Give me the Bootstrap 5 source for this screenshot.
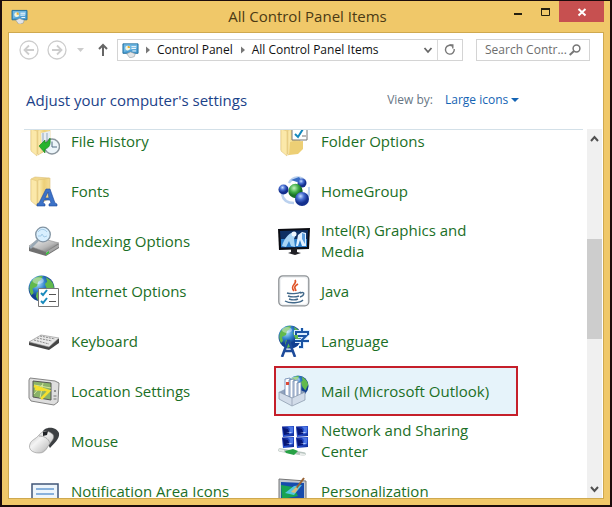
<!DOCTYPE html>
<html lang="en">
<head>
<meta charset="utf-8">
<meta name="viewport" content="width=device-width, initial-scale=1">
<title>All Control Panel Items</title>
<link rel="stylesheet" href="https://cdn.jsdelivr.net/npm/bootstrap@5.3.0/dist/css/bootstrap.min.css">
<style>
  body { font-family: "Open Sans", "Noto Sans", sans-serif; background: #f0c869; color: #111; }
  svg { display: block; flex: none; }
  button { border: 0; background: none; padding: 0; color: inherit; }
  .window { height: 100vh; border: 2px solid #1c0c0c; border-top-width: 1px; }
  .titlebar { height: 31px; padding-left: 9px; padding-right: 6px; }
  .titlebar h1 { font-size: 15px; line-height: 30px; color: #4b3a14; }
  .caption-side { flex: 1 1 0; }
  .caption-buttons button { height: 21px; width: 27px; }
  .caption-buttons .close-button { width: 45px; background: #c75050; }
  .client { margin: 0 6px 6px; border: 1px solid #cfa94f; background: #fff; min-height: 0; }
  .toolbar { height: 34px; padding: 0 13px 0 10px; }
  .field { height: 22px; border: 1px solid #d4d4d4; font-size: 12px; line-height: 20px; }
  .address { margin-left: 6px; margin-right: 13px; }
  .field a { color: #111; text-decoration: none; white-space: nowrap; }
  .refresh { width: 25px; border-left: 1px solid #d9d9d9; height: 20px; }
  .search { width: 114px; }
  .search input { border: 0; outline: 0; padding: 0 0 0 8px; width: 100%; min-width: 0; color: #6d6d6d; background: none; text-overflow: ellipsis; }
  .search input::placeholder { color: #6d6d6d; }
  .heading-row { height: 62px; padding: 4px 0 0 17px; }
  .heading-row h2 { font-size: 15px; line-height: 20px; color: #1b4289; }
  .view-by { font-size: 12px; margin-right: 84px; color: #687684; }
  .view-by select { appearance: none; border: 0; padding: 0; background: none; color: #1464b4; width: 66px; }
  .listing { min-height: 0; }
  .items-pane { overflow: hidden; border-top: 1px solid #d3e0e8; margin-left: 15px; margin-right: 4px; }
  .items { display: grid; grid-template-columns: repeat(auto-fill, 250px); grid-auto-rows: 50px; margin-top: -14px; }
  .item { padding: 0 24px 0 4px; gap: 11px; width: 244px; height: 50px; color: #1b6f26; font-size: 15px; line-height: 21px; text-decoration: none; }
  .item:hover { color: #1b6f26; background: #e8f4fb; }
  .item.selected { background: #e6f3fa; border: 2px solid #c51f2a; padding: 0 22px 0 2px; }
  .scrollbar { width: 16px; background: #f0f0f0; border-right: 1px solid #fff; }
  .scrollbar button { height: 20px; }
  .space-above { flex: 89 1 0; } .thumb { flex: 100 1 0; background: #cdcdcd; } .space-below { flex: 138 1 0; }
</style>
<script src="https://cdn.jsdelivr.net/npm/bootstrap@5.3.0/dist/js/bootstrap.bundle.min.js"></script>
</head>
<body>
<svg width="0" height="0" class="position-absolute" aria-hidden="true">
  <defs>
    <linearGradient id="fold" x1="0" x2="1"><stop stop-color="#fff0b5"/><stop offset=".5" stop-color="#eccf78"/><stop offset="1" stop-color="#f4dc94"/></linearGradient>
    <radialGradient id="globe" cx=".35" cy=".3"><stop stop-color="#b5e6ff"/><stop offset=".55" stop-color="#3485ce"/><stop offset="1" stop-color="#123f91"/></radialGradient>
    <radialGradient id="blue" cx=".4" cy=".3"><stop stop-color="#c4dcff"/><stop offset=".5" stop-color="#466cd0"/><stop offset="1" stop-color="#14308e"/></radialGradient>
    <radialGradient id="green" cx=".4" cy=".3"><stop stop-color="#c2f4bd"/><stop offset=".6" stop-color="#3eac46"/><stop offset="1" stop-color="#187025"/></radialGradient>
    <linearGradient id="metal" x2="1" y2="1"><stop stop-color="#fafafa"/><stop offset=".6" stop-color="#b7b7b7"/><stop offset="1" stop-color="#555"/></linearGradient>
    <linearGradient id="silver" x2="1" y2="1"><stop stop-color="#b5b5b5"/><stop offset=".4" stop-color="#f4f4f4"/><stop offset=".7" stop-color="#cfcfcf"/><stop offset="1" stop-color="#777"/></linearGradient>
    <linearGradient id="night" x2="1" y2="1"><stop stop-color="#061988"/><stop offset=".55" stop-color="#2850ce"/><stop offset="1" stop-color="#09258e"/></linearGradient>
    <symbol id="folder" viewBox="0 0 32 32">
      <path d="M3 4l4-2 14 1v20l-11 6-7-4z" fill="#f1d88c" stroke="#dcc078" stroke-width=".6"/>
      <path d="M10 5l12-2v20l-12 7z" fill="url(#fold)" stroke="#dcc078" stroke-width=".6"/>
      <path d="M3 4l6 2v25l-6-5z" fill="#fbe8a9" stroke="#e2c67c" stroke-width=".6"/>
    </symbol>
    <symbol id="earth" viewBox="0 0 24 24">
      <circle cx="12" cy="12" r="11.5" fill="url(#globe)"/>
      <path d="M2 8C4 3 9 .8 13 1l-1 3-3 2-1 4-4 2 1 4-2 2C1 15 1 11 2 8zM16 2c4 2 7 5 7 9l-3 6-3-4-2-5 2-2zM8 15l5 2-1 5-3 1-2-4z" fill="#62b94d"/>
      <ellipse cx="9" cy="5" rx="5" ry="3" fill="#fff" opacity=".4"/>
    </symbol>
    <symbol id="panel" viewBox="0 0 18 16">
      <path d="M1 1.5h16v10H1z" fill="#4b9ed3" stroke="#24719e"/>
      <path d="M2 2h14v4L2 10z" fill="#88c8ec" opacity=".6"/>
      <circle cx="6" cy="6" r="2.6" fill="#f3f7e3"/><path d="M6 6V3.4A2.6 2.6 0 018.6 6z" fill="#e9ae33"/>
      <path d="M10 4.5h5M10 6.5h5M11 9h4" stroke="#fff" stroke-width="1"/>
      <path d="M5 12l4-2 5 2-1 3-3 1H8z" fill="#e4e5e6" stroke="#8b969c" stroke-width=".6"/>
    </symbol>
    <symbol id="pc" viewBox="0 0 12 11"><path d="M0 .5l12-.5v10L1 11z" fill="url(#night)"/><path d="M1 2l5 1 2 5-6 1z" fill="#061674"/><path d="M5 0l3 3-1 5 4-1V1z" fill="#4b76e5"/><path d="M4 7l6-1-1 1z" fill="#dce9ff"/></symbol>
  </defs>
</svg>

<div class="window d-flex flex-column">
  <header class="titlebar d-flex flex-shrink-0">
    <div class="caption-side d-flex align-items-center"><svg width="17" height="15"><use href="#panel"/></svg></div>
    <h1 class="m-0 fw-normal">All Control Panel Items</h1>
    <div class="caption-side caption-buttons d-flex justify-content-end">
      <button type="button" aria-label="Minimize"><svg width="27" height="21"><path d="M9 13h8" stroke="#25200f" stroke-width="2"/></svg></button>
      <button type="button" aria-label="Maximize"><svg width="27" height="21"><path d="M9.500 8v6.500h8V8" fill="none" stroke="#25200f"/><path d="M9 8h9" stroke="#25200f" stroke-width="2"/></svg></button>
      <button type="button" class="close-button" aria-label="Close"><svg width="45" height="21"><path d="M19.500 8l7 6.500M26.500 8l-7 6.500" stroke="#fff" stroke-width="2"/></svg></button>
    </div>
  </header>

  <main class="client d-flex flex-column flex-grow-1">
    <nav class="toolbar d-flex align-items-center flex-shrink-0" aria-label="Location">
      <button type="button" aria-label="Back"><svg width="20" height="20" fill="none" stroke="#cdcdcd" stroke-width="1.300"><circle cx="10" cy="10" r="9"/><path d="M15 10H6M10 5.500L5.500 10l4.500 4.500" stroke-width="1.800"/></svg></button>
      <button type="button" class="ms-2" aria-label="Forward"><svg width="20" height="20" fill="none" stroke="#cdcdcd" stroke-width="1.300"><circle cx="10" cy="10" r="9"/><path d="M5 10h9M10 5.500l4.500 4.500-4.500 4.500" stroke-width="1.800"/></svg></button>
      <button type="button" class="ms-2" aria-label="Recent locations"><svg width="12" height="12"><path d="M2 4h7L5.500 8z" fill="#ccc"/></svg></button>
      <button type="button" class="ms-2" aria-label="Up"><svg width="16" height="16" fill="none" stroke="#666" stroke-width="2"><path d="M8 14V3M4 7l4-4 4 4"/></svg></button>
      <div class="field address d-flex align-items-center flex-grow-1">
        <svg class="ms-1" width="17" height="16"><use href="#panel"/></svg>
        <svg width="18" height="10"><path d="M7 1.500l4 3.500-4 3.500z" fill="#777"/></svg>
        <a href="#">Control Panel</a>
        <svg width="19" height="10"><path d="M8 1.500l4 3.500-4 3.500z" fill="#777"/></svg>
        <a href="#">All Control Panel Items</a>
        <button type="button" class="ms-auto" aria-label="Previous locations"><svg width="18" height="12"><path d="M5.500 4L9 8l3.500-4" fill="none" stroke="#666" stroke-width="1.800"/></svg></button>
        <button type="button" class="refresh d-flex align-items-center justify-content-center" aria-label="Refresh"><svg width="12" height="12" fill="none" stroke="#777" stroke-width="1.400"><path d="M8.500 2.200A4.400 4.400 0 1010.200 5"/><path d="M5.500 1h3.300v3.500"/></svg></button>
      </div>
      <div class="field search d-flex align-items-center flex-shrink-0">
        <input type="text" aria-label="Search Control Panel" placeholder="Search Contr...">
        <svg class="me-2" width="12" height="12" fill="none" stroke="#777"><circle cx="7.500" cy="4.500" r="3.400" stroke-width="1.500"/><path d="M5 7l-4.300 4" stroke-width="2"/></svg>
      </div>
    </nav>
    <div class="heading-row d-flex align-items-center flex-shrink-0">
      <h2 class="m-0 fw-normal">Adjust your computer's settings</h2>
      <div class="view-by d-flex align-items-center ms-auto">
        <label for="view" class="me-2 pe-1">View by:</label>
        <select id="view"><option>Large icons</option></select>
        <svg width="8" height="8"><path d="M0 2h8L4 6z" fill="#1464b4"/></svg>
      </div>
    </div>

    <div class="listing d-flex flex-grow-1">
      <div class="items-pane flex-grow-1">
        <div class="items">
          <a href="#" class="item d-flex align-items-center"><svg width="32" height="32"><use href="#folder"/><path d="M13 8l9-2v17l-8 3z" fill="#e8edf2"/><path d="M15 8v15M19 8v12" stroke="#91a7bf"/><circle cx="24" cy="21.500" r="7.500" fill="#edf5fa" stroke="#8b969e" stroke-width="1.500"/><path d="M24 16.500V22h5" fill="none" stroke="#506d84"/><path d="M11 21l6-6v3c3-1 4-3 5-5 1 7-1 10-5 11v4z" fill="#27b32d" stroke="#147e1b" stroke-width=".6"/></svg><span>File History</span></a>
          <a href="#" class="item d-flex align-items-center"><svg width="32" height="32"><use href="#folder"/><path d="M12 17l13-1v8l-5 5-9 1z" fill="#edcf75"/><path d="M14 1h15v14H14z" fill="#fff" stroke="#777"/><path d="M17 9l3 3 5-8" fill="none" stroke="#1689bd" stroke-width="2"/><path d="M24 11h4" stroke="#777"/></svg><span>Folder Options</span></a>
          <a href="#" class="item d-flex align-items-center"><svg width="32" height="32"><use href="#folder"/><path d="M9 31v-2l2-1 7-14h4l5 14 2 1v2h-8v-2l2-1-1-3h-6l-1 3 2 1v2zM17 23h4l-1-6z" fill="#3b72c8" stroke="#1d479c" stroke-width=".6" fill-rule="evenodd"/></svg><span>Fonts</span></a>
          <a href="#" class="item d-flex align-items-center"><svg width="32" height="32"><path d="M11 8C15 1 23 1 27 6M4 19c1 6 5 9 12 9M31 12c1 5 0 9-3 13" fill="none" stroke="#bbd1ee" stroke-width="2.500"/><path d="M13 5l8-3 3 4-5 1z" fill="#386dc4"/><circle cx="5.500" cy="14.500" r="5" fill="url(#blue)"/><circle cx="24" cy="8" r="4.500" fill="url(#blue)"/><circle cx="17.500" cy="16" r="7.200" fill="url(#green)"/><circle cx="24" cy="24" r="7" fill="url(#blue)"/></svg><span>HomeGroup</span></a>
          <a href="#" class="item d-flex align-items-center"><svg width="32" height="32"><path d="M1 22l10-7 20 4v4l-13 8-17-5z" fill="#707070"/><path d="M1 21l11-8 19 5-13 9z" fill="url(#metal)" stroke="#8c8c8c" stroke-width=".6"/><path d="M18 27l13-8v3l-13 8z" fill="#a7a7a7"/><path d="M18 28l3-2v2l-3 2z" fill="#34c739"/><path d="M10 15l-8 8" stroke="#9aa9b5" stroke-width="2.500"/><circle cx="15" cy="9.500" r="7.300" fill="#d8efff" stroke="#8193a2" stroke-width="1.300"/><path d="M10 7c3-4 7-3 9 0M10 11h3l1-2 2 3 3-1" fill="none" stroke="#a5cce8"/></svg><span>Indexing Options</span></a>
          <a href="#" class="item d-flex align-items-center"><svg width="32" height="32"><path d="M0 4l32-1-1 21-30 1z" fill="#0b0c12"/><path d="M2 6l28-1-1 17-26 1z" fill="#0d2f63"/><path d="M3 14h26v8H3z" fill="#2d7fcb"/><path d="M4 21c2-7 6-12 11-14l3 2-2 5 1 8-4-1-2-5-3 6z" fill="#a9d5f5"/><circle cx="16" cy="9" r="2.500" fill="#eef7ff"/><path d="M20 10l4-3 4 1v13h-4l-2-6-2 6h-2z" fill="#e2f1ff"/><path d="M24 8l3 1v10l-3-5z" fill="#5c9ede"/><path d="M13 24l6-1v4l4 1-6 2-7-2 3-1z" fill="#202026"/></svg><span>Intel(R) Graphics and Media</span></a>
          <a href="#" class="item d-flex align-items-center"><svg width="32" height="32"><use href="#earth" x="0" y="0" width="27" height="27"/><path d="M10.500 13.500h20v18h-20z" fill="#fff" stroke="#777"/><path d="M13 18l2 2 4-5M13 26l2 2 4-5" fill="none" stroke="#1789bc" stroke-width="2"/><path d="M21 19.500h7M21 26.500h7" stroke="#555"/></svg><span>Internet Options</span></a>
          <a href="#" class="item d-flex align-items-center"><svg width="32" height="32"><rect x=".8" y=".8" width="30" height="30" rx="4" fill="#f0f2f4" stroke="#8f9396" stroke-width="1.300"/><rect x="3" y="3" width="26" height="26" rx="3" fill="#fff"/><path d="M17 5c3 4-6 5-1 11M20 9c-5 3-3 4-2 7" fill="none" stroke="#e05428" stroke-width="1.700"/><path d="M9 18c3 1 11 1 14-1M10 21c3 1 8 1 11 0M11 24c3 1 7 1 9 0M7 26c5 3 15 2 18-1M22 18c6-2 4 3 0 4" fill="none" stroke="#42698a" stroke-width="1.400"/></svg><span>Java</span></a>
          <a href="#" class="item d-flex align-items-center"><svg width="32" height="32"><path d="M1 17l12-5 18 2v4l-10 7L1 20z" fill="#454545"/><path d="M1 17l12-7 18 3-10 9z" fill="#e8e8e8" stroke="#888" stroke-width=".6"/><path d="M6 15l15 4M9 13l15 3M12 11l15 3" stroke="#8a8a8a" stroke-dasharray="2 1"/></svg><span>Keyboard</span></a>
          <a href="#" class="item d-flex align-items-center"><svg width="32" height="32"><use href="#earth" x="0" y="0" width="24" height="24"/><path d="M4 32l6-16h1l6 16M7 26h8" fill="none" stroke="#1d4b9b" stroke-width="2.600"/><g fill="none" stroke="#d9ecff" stroke-width="4"><path d="M24 3v3M18 10V7h12v3M20 11h8l-4 4v7h-3M17 16h14"/></g><g fill="none" stroke="#1953a4" stroke-width="2"><path d="M24 3v3M18 10V7h12v3M20 11h8l-4 4v7h-3M17 16h14"/></g></svg><span>Language</span></a>
          <a href="#" class="item d-flex align-items-center"><svg width="32" height="32"><path d="M2 3l25 3 4 2-1 19-4 3-23-4-2-3L1 5z" fill="#dedede" stroke="#858585"/><path d="M5 6l18 2v17L5 22z" fill="#8ab269" stroke="#555"/><path d="M6 10l17 3M6 19l8-9M15 8l-3 15" stroke="#d7e59d"/><path d="M6 11l15 5-8 8M7 14l9 1" fill="none" stroke="#f4df2e" stroke-width="2.500"/><circle cx="27" cy="16" r="1" fill="#777"/><path d="M25.500 21h3M25.500 24h3" stroke="#777"/></svg><span>Location Settings</span></a>
          <a href="#" class="item selected d-flex align-items-center"><svg width="32" height="32"><use href="#earth" x="9" y="0" width="22" height="22"/><path d="M1 17l12-6 14 6-13 8z" fill="#90a2bd"/><path d="M7 4l5-1v19l-5-2zM11 5l5-1v20l-5-2zM15 6l5-1v20l-5-1zM19 8l4-1v16l-4 1z" fill="#fff" stroke="#6784ad" stroke-width=".8"/><path d="M8 7h3v3H8z" fill="#dc4935"/><path d="M1 17l13 6 13-6v8l-13 6-13-7z" fill="#d2dce9" stroke="#8493a6" stroke-width=".7"/><path d="M14 23v8" stroke="#9faabd"/></svg><span>Mail (Microsoft Outlook)</span></a>
          <a href="#" class="item d-flex align-items-center"><svg width="32" height="32"><path d="M14 9C15 1 28 1 31 8c1 6-5 10-9 15z" fill="#3c3f42"/><path d="M11 10c3-4 8-5 12-2 4 2 3 6 0 9-4 5-5 11-12 11-7 0-11-4-9-9 1-4 6-5 9-9z" fill="url(#silver)" stroke="#8d8d8d" stroke-width=".6"/><path d="M11 11c5 0 9 2 11 7" fill="none" stroke="#aaa"/><path d="M15 7l5-1-1 4-4 1z" fill="#202226"/></svg><span>Mouse</span></a>
          <a href="#" class="item d-flex align-items-center"><svg width="32" height="32"><use href="#pc" x="4" y="1" width="12" height="11"/><use href="#pc" x="18" y="1" width="12" height="11"/><use href="#pc" x="4" y="12" width="12" height="11"/><use href="#pc" x="18" y="12" width="12" height="11"/><path d="M2 25l24 4" stroke="#b9c5c0" stroke-width="3.500" stroke-linecap="round"/><path d="M7 26l8-2 5 2-4 4-8-2z" fill="#27a145"/><path d="M1 25l5 1M22 29l5 1" stroke="#e9edeb" stroke-width="2"/></svg><span>Network and Sharing Center</span></a>
          <a href="#" class="item d-flex align-items-center"><svg width="32" height="32"><path d="M4 9h26v16H4z" fill="#edf5fb" stroke="#405578" stroke-width="1.500"/><path d="M8 14h18M8 19h18" stroke="#679bd2" stroke-width="1.500"/></svg><span>Notification Area Icons</span></a>
          <a href="#" class="item d-flex align-items-center"><svg width="32" height="32"><path d="M1 4l27 2v20L1 28z" fill="#c3c8d1" stroke="#777"/><path d="M3 7l23 1v15L3 25z" fill="#174bac"/><path d="M3 10l12 2 5 9-16 3z" fill="#18a352"/><path d="M7 18l9-7 8-1-8 10z" fill="#55c6e2"/><path d="M17 15l9-12" stroke="#986334" stroke-width="2"/><path d="M13 17l5-5 2 2-3 4z" fill="#d8bd7c"/></svg><span>Personalization</span></a>
        </div>
      </div>
      <div class="scrollbar d-flex flex-column flex-shrink-0" aria-label="Scroll items">
        <button type="button" aria-label="Scroll up"><svg width="15" height="20"><path d="M4 12l3.500-4 3.500 4" fill="none" stroke="#505050" stroke-width="2"/></svg></button>
        <div class="space-above"></div><div class="thumb"></div><div class="space-below"></div>
        <button type="button" aria-label="Scroll down"><svg width="15" height="20"><path d="M4 9l3.500 4L11 9" fill="none" stroke="#505050" stroke-width="2"/></svg></button>
      </div>
    </div>
  </main>
</div>
</body>
</html>
